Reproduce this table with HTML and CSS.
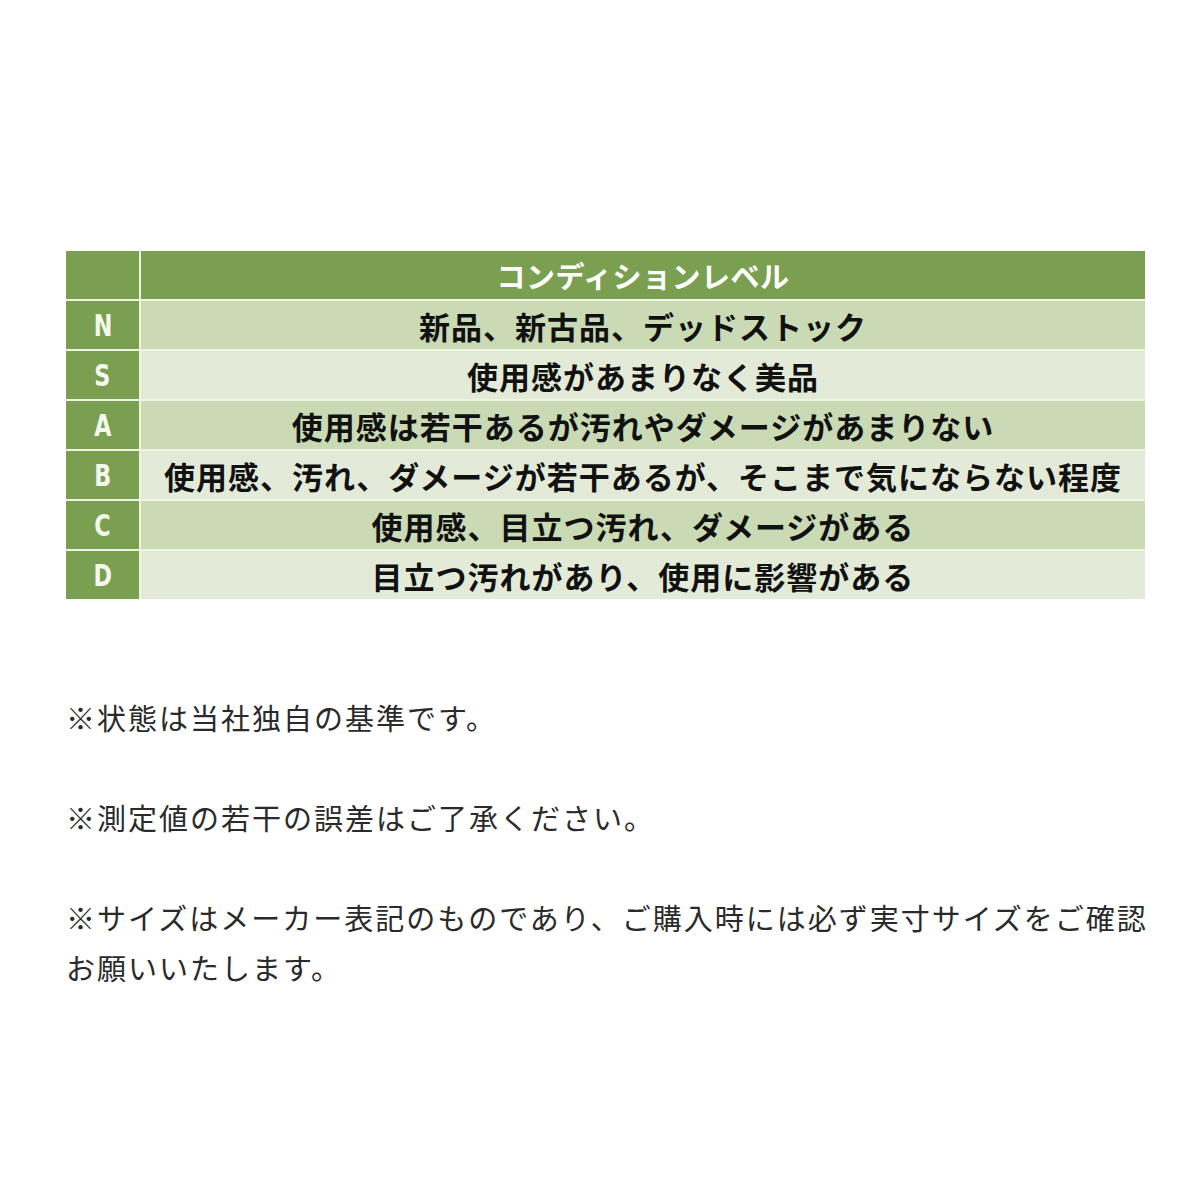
FILE: index.html
```html
<!DOCTYPE html>
<html lang="ja">
<head>
<meta charset="utf-8">
<title>コンディションレベル</title>
<link rel="stylesheet" href="styles.css">
</head>
<body>
<main class="page">
  <section class="cond-table">
    <div class="cell label head"></div>
    <div class="cell desc head">コンディションレベル</div>

    <div class="cell label"><span class="letter">N</span></div>
    <div class="cell desc dark">新品、新古品、デッドストック</div>

    <div class="cell label"><span class="letter">S</span></div>
    <div class="cell desc light">使用感があまりなく美品</div>

    <div class="cell label"><span class="letter">A</span></div>
    <div class="cell desc dark">使用感は若干あるが汚れやダメージがあまりない</div>

    <div class="cell label"><span class="letter">B</span></div>
    <div class="cell desc light">使用感、汚れ、ダメージが若干あるが、そこまで気にならない程度</div>

    <div class="cell label"><span class="letter">C</span></div>
    <div class="cell desc dark">使用感、目立つ汚れ、ダメージがある</div>

    <div class="cell label"><span class="letter">D</span></div>
    <div class="cell desc light">目立つ汚れがあり、使用に影響がある</div>
  </section>

  <section class="notes">
    <p class="note">※状態は当社独自の基準です。</p>
    <p class="note">※測定値の若干の誤差はご了承ください。</p>
    <p class="note">※サイズはメーカー表記のものであり、ご購入時には必ず実寸サイズをご確認<br>お願いいたします。</p>
  </section>
</main>
</body>
</html>
```

FILE: styles.css
```css
html, body {
  margin: 0;
  padding: 0;
  background: #ffffff;
}

.page {
  padding: 251px 0 0 66px;
  font-family: "Noto Sans CJK JP", "Noto Sans", sans-serif;
}

.cond-table {
  width: 1079px;
  display: grid;
  grid-template-columns: 73px 1fr;
  grid-auto-rows: 48px;
  gap: 2px;
  background: #eef6e2;
}

.cell {
  display: flex;
  align-items: center;
  justify-content: center;
}

.label {
  background: #7a9f50;
  color: #f4f8ee;
  font-family: "DejaVu Sans", "Liberation Sans", sans-serif;
  font-weight: 700;
  font-size: 31px;
  line-height: 1;
}

.letter {
  display: inline-block;
  transform: scaleX(0.72);
}

.desc {
  color: #111111;
  font-weight: 700;
  font-size: 31px;
  letter-spacing: 1px;
  white-space: nowrap;
}

.desc.head {
  background: #7a9f50;
  color: #ffffff;
  font-size: 29px;
  letter-spacing: 0.5px;
}

.desc.dark {
  background: #c9dab4;
}

.desc.light {
  background: #e3ebd8;
}

.notes {
  padding-top: 93px;
  display: flex;
  flex-direction: column;
  gap: 50px;
}

.note {
  margin: 0;
  color: #2a2a2a;
  font-size: 29px;
  line-height: 50px;
  letter-spacing: 2px;
  white-space: nowrap;
}
```
